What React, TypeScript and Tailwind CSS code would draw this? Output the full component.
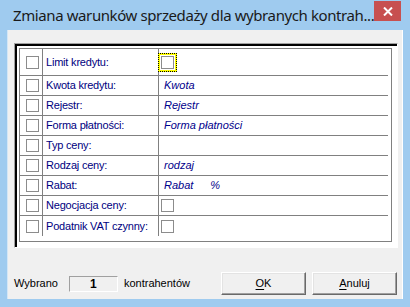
import React from 'react';

type Row = { label: string; value?: React.ReactNode; first?: boolean };

const sans = { fontFamily: '"Liberation Sans", Arial, sans-serif' };

function Box() {
  return <span className="inline-block h-[13px] w-[13px] border border-[#8c8c8c] bg-white" />;
}

function Value({ children }: { children: React.ReactNode }) {
  return <span className="pl-[5px] text-[11px] italic text-[#00008b]">{children}</span>;
}

const rows: Row[] = [
  {
    label: 'Limit kredytu:',
    first: true,
    value: (
      <span className="inline-flex h-[19px] w-[19px] -ml-[1px] items-center justify-center border border-dotted border-black bg-[#ffff00]">
        <span className="inline-flex h-[15px] w-[15px] items-center justify-center bg-white">
          <Box />
        </span>
      </span>
    ),
  },
  { label: 'Kwota kredytu:', value: <Value>Kwota</Value> },
  { label: 'Rejestr:', value: <Value>Rejestr</Value> },
  { label: 'Forma płatności:', value: <Value>Forma płatności</Value> },
  { label: 'Typ ceny:' },
  { label: 'Rodzaj ceny:', value: <Value>rodzaj</Value> },
  {
    label: 'Rabat:',
    value: (
      <Value>
        Rabat<span className="ml-[17px]">%</span>
      </Value>
    ),
  },
  { label: 'Negocjacja ceny:', value: <span className="ml-[2px] flex"><Box /></span> },
  { label: 'Podatnik VAT czynny:', value: <span className="ml-[2px] flex"><Box /></span> },
];

function Button({ label, hot }: { label: string; hot: string }) {
  const rest = label.slice(1);
  return (
    <button
      type="button"
      className="flex h-[23px] w-[85px] items-center justify-center border border-b-[#696969] border-l-white border-r-[#696969] border-t-white bg-[#f0f0f0] text-[11px] text-black shadow-[inset_-1px_-1px_0_#a0a0a0,inset_1px_1px_0_#e3e3e3]"
    >
      <span className="underline underline-offset-2">{hot}</span>
      {rest}
    </button>
  );
}

export default function App() {
  return (
    <div className="flex h-[307px] w-[410px] flex-col bg-[#9fcbef]" style={sans}>
      <div className="flex h-[30px] shrink-0 items-start">
        <span
          className="ml-[13px] mt-[5px] whitespace-nowrap text-[15px] leading-[20px] tracking-[-0.4px] text-[#1a1a1a]"
          style={{ fontFamily: '"Noto Sans", "Open Sans", sans-serif' }}
        >
          Zmiana warunków sprzedaży dla wybranych kontrah...
        </span>
        <button type="button" aria-label="Zamknij" className="ml-auto mr-[9px] mt-[1px] flex h-[20px] w-[29px] items-center justify-center bg-[#c75050]">
          <svg width="10" height="9" viewBox="0 0 10 9">
            <path d="M1 0.5 L9 8.5 M9 0.5 L1 8.5" stroke="white" strokeWidth="2" />
          </svg>
        </button>
      </div>

      <div className="mx-[7px] flex h-[269px] flex-col border-x border-l-[#d3e6f6] border-r-white bg-[#f0f0f0]">
        <div className="ml-[6px] mr-[4px] mt-[13px] h-[205px] border-b border-l border-r border-t border-b-white border-l-[#a0a0a0] border-r-white border-t-[#a0a0a0]">
          <div className="h-full border-l-2 border-t-2 border-black bg-white pl-[2px] pr-[5px] pt-[2px]">
            <div className="h-[194px] border border-[#808080] pr-[3px]">
              {rows.map((row, i) => (
                <div
                  key={row.label}
                  className={`flex items-center ${row.first ? 'h-[27px]' : 'h-[20px]'} ${i < rows.length - 1 ? 'border-b border-[#808080]' : ''}`}
                >
                  <div className="flex h-full w-[23px] shrink-0 items-center border-r border-[#808080] pl-[6px]">
                    <Box />
                  </div>
                  <div className="flex h-full w-[116px] shrink-0 items-center border-r border-[#808080] pl-[3px] text-[11px] tracking-[-0.2px] text-[#000080] whitespace-nowrap">
                    {row.label}
                  </div>
                  <div className="flex h-full flex-1 items-center">{row.value}</div>
                </div>
              ))}
            </div>
          </div>
        </div>

        <div className="mt-[24px] flex items-center pl-[6px] pr-[5px] text-[11px] text-black">
          <span>Wybrano</span>
          <span className="ml-[11px] flex h-[16px] w-[49px] items-center justify-center border border-b-white border-l-[#a0a0a0] border-r-white border-t-[#a0a0a0] text-[12px] font-bold">
            1
          </span>
          <span className="ml-[6px]">kontrahentów</span>
          <div className="ml-auto flex gap-[6px]">
            <Button label="OK" hot="O" />
            <Button label="Anuluj" hot="A" />
          </div>
        </div>
      </div>
    </div>
  );
}
